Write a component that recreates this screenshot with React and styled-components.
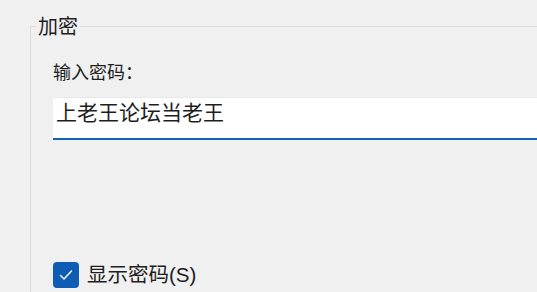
import React from 'react'
import styled, { createGlobalStyle } from 'styled-components'

const Global = createGlobalStyle`
  html, body {
    margin: 0;
    padding: 0;
    background: #f0f0f0;
    overflow: hidden;
  }
  body {
    font-family: "Liberation Sans", "Noto Sans CJK SC", sans-serif;
    color: #1e1e1e;
  }
`

const Page = styled.div`
  width: 537px;
  height: 292px;
  overflow: hidden;
`

const Group = styled.fieldset`
  box-sizing: border-box;
  width: 620px;
  height: 400px;
  margin: 12px 0 0 30px;
  padding: 0 0 0 22px;
  border: 1px solid #dcdcdc;
  border-right: none;
  border-bottom: none;
  min-width: 0;
`

const Legend = styled.legend`
  margin-left: -17px;
  padding: 0 2px;
  font-family: "Noto Sans CJK SC", sans-serif;
  font-size: 20px;
  line-height: 28px;
`

const FieldLabel = styled.label`
  display: block;
  margin-top: 19px;
  font-family: "Noto Sans CJK SC", sans-serif;
  font-size: 18px;
  line-height: 24px;
`

const TextBox = styled.input`
  display: block;
  box-sizing: border-box;
  width: 100%;
  height: 43px;
  margin-top: 14px;
  padding: 0 3px 14px;
  border: none;
  border-top: 1px solid #e8e8e8;
  border-bottom: 2px solid #1762b0;
  background: #fff;
  font-family: "Noto Sans CJK SC", sans-serif;
  font-size: 21px;
  color: #1e1e1e;
  outline: none;
`

const CheckRow = styled.label`
  display: flex;
  align-items: center;
  gap: 8px;
  margin-top: 122px;
  font-size: 20.5px;
  line-height: 26px;
`

const Box = styled.span`
  display: inline-flex;
  align-items: center;
  justify-content: center;
  width: 26px;
  height: 26px;
  border-radius: 4px;
  background: ${p => (p.checked ? '#0f5cb5' : '#fff')};
`

const App = () => {
  return (
    <Page>
      <Global />
      <Group>
        <Legend>加密</Legend>
        <FieldLabel>输入密码：</FieldLabel>
        <TextBox type="text" defaultValue="上老王论坛当老王" />
        <CheckRow>
          <Box checked>
            <svg width="16" height="16" viewBox="0 0 16 16" fill="none">
              <path d="M2.5 8.5 L6 12 L13.5 4" stroke="#fff" strokeWidth="1.4" strokeLinecap="round" strokeLinejoin="round" />
            </svg>
          </Box>
          <span>显示密码(S)</span>
        </CheckRow>
      </Group>
    </Page>
  )
}

export default App
